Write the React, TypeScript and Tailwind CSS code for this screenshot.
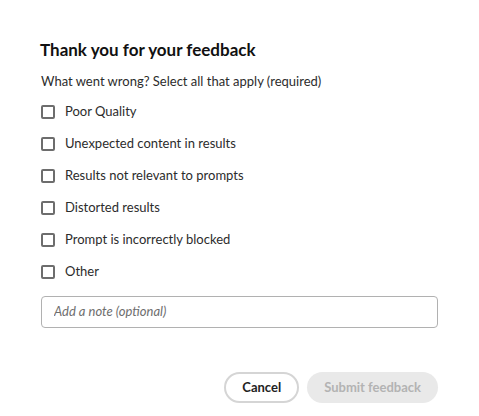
import { useState } from "react";

const reasons = [
  "Poor Quality",
  "Unexpected content in results",
  "Results not relevant to prompts",
  "Distorted results",
  "Prompt is incorrectly blocked",
  "Other",
];

export default function App() {
  const [checked, setChecked] = useState<string[]>([]);

  const toggle = (r: string) =>
    setChecked((c) => (c.includes(r) ? c.filter((x) => x !== r) : [...c, r]));

  return (
    <div
      className="w-[479px] h-[416px] bg-white text-[#222222] pl-10 pr-[41px] pt-[38px]"
      style={{ fontFamily: "Lato, 'Noto Sans', sans-serif" }}
    >
      <h2 className="text-[17px] leading-6 font-bold text-[#111111]">
        Thank you for your feedback
      </h2>
      <p className="mt-[9px] pl-px text-[13px] leading-5 text-[#2c2c2c]">
        What went wrong? Select all that apply (required)
      </p>

      <div className="mt-[5px] flex flex-col">
        {reasons.map((r) => (
          <label
            key={r}
            className="h-8 flex items-center gap-[10px] pl-px cursor-pointer"
            onClick={() => toggle(r)}
          >
            <span className="w-[14px] h-[14px] border-2 border-[#6d6d6d] rounded-[2px] bg-white" />
            <span className="text-[13px] text-[#2c2c2c]">{r}</span>
          </label>
        ))}
      </div>

      <div className="mt-[8px] ml-px h-8 border border-[#b1b1b1] rounded-[4px] flex items-center px-3">
        <input
          className="w-full outline-none text-[13px] italic placeholder:text-[#6e6e6e] bg-transparent"
          placeholder="Add a note (optional)"
        />
      </div>

      <div className="mt-[44px] flex justify-end gap-2">
        <button className="h-[31px] px-4 rounded-full border-2 border-[#d5d5d5] text-[13px] font-bold text-[#222222]">
          Cancel
        </button>
        <button className="h-[31px] px-[17px] rounded-full bg-[#e9e9e9] text-[13px] font-bold text-[#b3b3b3]">
          Submit feedback
        </button>
      </div>
    </div>
  );
}
